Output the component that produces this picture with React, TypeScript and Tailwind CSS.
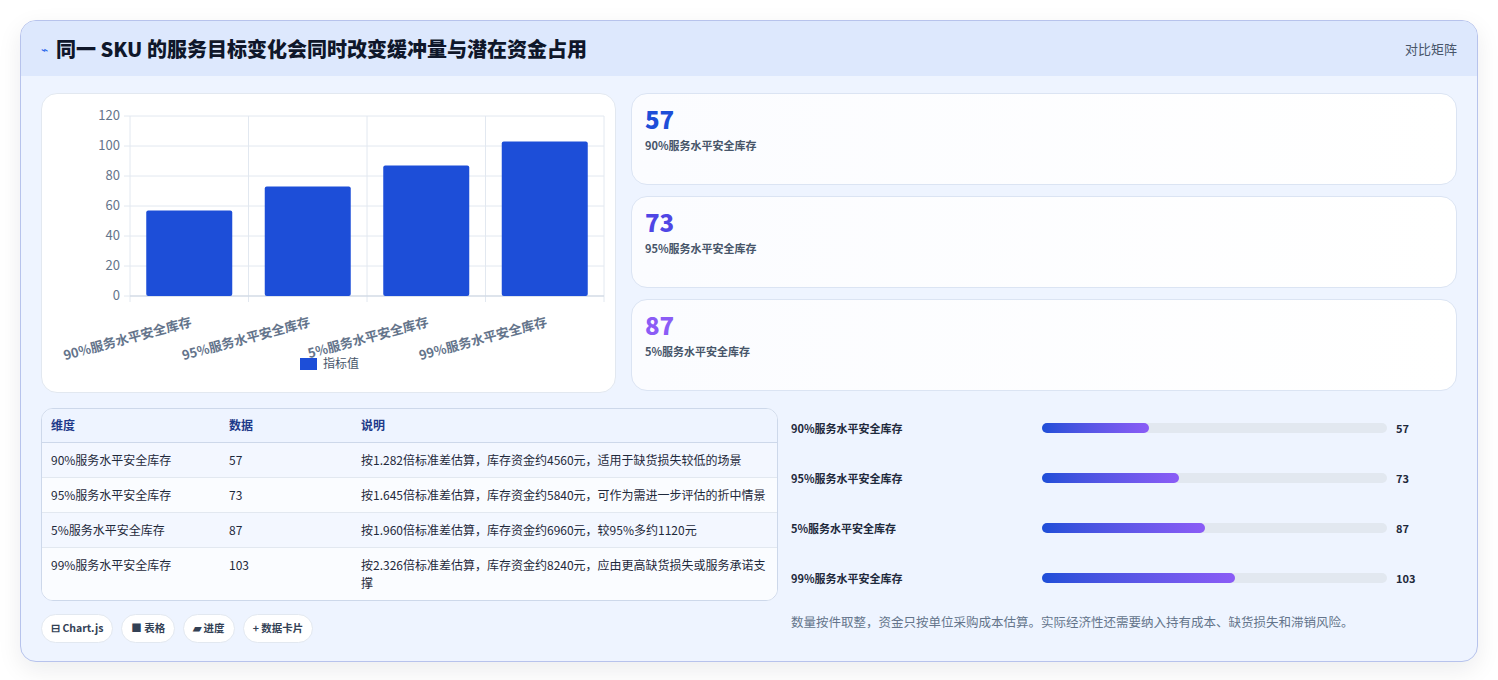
const rows = [
  { name: "90%服务水平安全库存", v: 57, note: "按1.282倍标准差估算，库存资金约4560元，适用于缺货损失较低的场景" },
  { name: "95%服务水平安全库存", v: 73, note: "按1.645倍标准差估算，库存资金约5840元，可作为需进一步评估的折中情景" },
  { name: "5%服务水平安全库存", v: 87, note: "按1.960倍标准差估算，库存资金约6960元，较95%多约1120元" },
  { name: "99%服务水平安全库存", v: 103, note: "按2.326倍标准差估算，库存资金约8240元，应由更高缺货损失或服务承诺支撑" },
];

const statColors = ["text-[#1d4ed8]", "text-[#4f46e5]", "text-[#8b5cf6]"];

function Chart() {
  // plot area inside svg: x 88..562, y 22..202 (0..120)
  const x0 = 88, w = 474, y0 = 202, h = 180;
  const step = w / 4;
  return (
    <svg width="574" height="298" className="block">
      {[0, 20, 40, 60, 80, 100, 120].map((t) => {
        const y = y0 - (t / 120) * h;
        return (
          <g key={t}>
            <line x1={x0 - 6} x2={x0 + w} y1={y} y2={y} stroke="#e2e8f0" />
            <text x={x0 - 10} y={y + 4} textAnchor="end" fontSize="13" fill="#64748b">{t}</text>
          </g>
        );
      })}
      {[0, 1, 2, 3, 4].map((i) => (
        <line key={i} x1={x0 + i * step} x2={x0 + i * step} y1={22} y2={y0 + 6} stroke="#e2e8f0" />
      ))}
      <line x1={x0} x2={x0 + w} y1={y0} y2={y0} stroke="#cbd5e1" />
      {rows.map((r, i) => {
        const bh = (r.v / 120) * h;
        const cx = x0 + step * i + step / 2;
        return (
          <g key={r.name}>
            <rect x={cx - 43} y={y0 - bh} width={86} height={bh} rx={2} fill="#1d4ed8" />
            <text
              x={cx + 3}
              y={y0 + 30}
              textAnchor="end"
              fontSize="13"
              fontWeight="600"
              fill="#64748b"
              transform={`rotate(-15 ${cx + 3} ${y0 + 30})`}
            >
              {r.name}
            </text>
          </g>
        );
      })}
      <rect x={258} y={264} width={17} height={12} fill="#1d4ed8" />
      <text x={281} y={274} fontSize="12" fill="#475569">指标值</text>
    </svg>
  );
}

export default function App() {
  return (
    <div className="min-h-[680px] bg-white pt-5 px-5 pb-5" style={{ fontFamily: '"Noto Sans CJK SC", "Noto Sans", sans-serif' }}>
      <div className="overflow-hidden rounded-2xl border border-[#b7c3ec] bg-[#eef4ff] shadow-[0_8px_24px_rgba(15,23,42,0.08)]">
        <div className="flex h-[55px] items-center justify-between bg-[#dde8fd] px-5">
          <div className="flex items-center gap-2">
            <span className="text-xs text-[#2563eb]">⌁</span>
            <h1 className="text-[20px] font-extrabold text-[#0f172a]">同一 SKU 的服务目标变化会同时改变缓冲量与潜在资金占用</h1>
          </div>
          <span className="text-[13px] text-[#475569]">对比矩阵</span>
        </div>

        <div className="px-5 pt-[17px] pb-[18px]">
          <div className="flex gap-[15px]">
            <div className="w-[575px] shrink-0 rounded-2xl border border-[#e2e8f0] bg-white">
              <Chart />
            </div>
            <div className="flex flex-1 flex-col gap-[11px]">
              {rows.slice(0, 3).map((r, i) => (
                <div key={r.name} className="h-[92px] rounded-2xl border border-[#dbe4f3] bg-gradient-to-r from-[#fbfcff] to-white px-[13px] pt-[9px]">
                  <div className={`text-[24px] font-black leading-[32px] ${statColors[i]}`}>{r.v}</div>
                  <div className="mt-[2px] text-[11px] font-semibold text-[#475569]">{r.name}</div>
                </div>
              ))}
            </div>
          </div>

          <div className="mt-[15px] flex gap-[13px]">
            <div className="w-[737px] shrink-0">
              <div className="overflow-hidden rounded-xl border border-[#cdd8ea] bg-white">
                <table className="w-full table-fixed text-left text-[12px] text-[#1e293b]">
                  <thead>
                    <tr className="h-[33px] border-b border-[#cdd8ea] bg-[#eef4ff] text-[#1e3a8a]">
                      <th className="pl-[9px] w-[187px] font-semibold">维度</th>
                      <th className="w-[132px] font-semibold">数据</th>
                      <th className="font-semibold">说明</th>
                    </tr>
                  </thead>
                  <tbody>
                    {rows.map((r, i) => (
                      <tr key={r.name} className={`border-b border-[#e2e8f0] last:border-0 align-top ${i % 2 === 0 ? "bg-[#f3f7ff]" : "bg-[#fafcff]"}`}>
                        <td className="pl-[9px] py-[8px] leading-[18px]">{r.name}</td>
                        <td className="py-[8px] leading-[18px]">{r.v}</td>
                        <td className="py-[8px] pr-[8px] leading-[18px]">{r.note}</td>
                      </tr>
                    ))}
                  </tbody>
                </table>
              </div>
              <div className="mt-[13px] flex gap-2">
                {["⊟ Chart.js", "■ 表格", "▰ 进度", "+ 数据卡片"].map((t) => (
                  <span key={t} className="flex h-[29px] items-center rounded-full border border-[#e2e8f0] bg-white px-[9px] text-[10.5px] font-semibold text-[#334155]">{t}</span>
                ))}
              </div>
            </div>

            <div className="flex-1">
              <div className="flex flex-col gap-[32px] pt-[11px]">
                {rows.map((r) => (
                  <div key={r.name} className="flex h-[18px] items-center">
                    <span className="w-[251px] text-[11px] font-bold text-[#1e293b]">{r.name}</span>
                    <div className="h-[10px] w-[345px] rounded-full bg-[#e2e8f0]">
                      <div className="h-full rounded-full bg-gradient-to-r from-[#1d4ed8] to-[#8b5cf6]" style={{ width: `${(r.v / 184) * 100}%` }} />
                    </div>
                    <span className="ml-[9px] text-[11px] font-bold text-[#1e293b]">{r.v}</span>
                  </div>
                ))}
              </div>
              <p className="mt-[26px] text-[12.5px] text-[#64748b]">数量按件取整，资金只按单位采购成本估算。实际经济性还需要纳入持有成本、缺货损失和滞销风险。</p>
            </div>
          </div>
        </div>
      </div>
    </div>
  );
}
